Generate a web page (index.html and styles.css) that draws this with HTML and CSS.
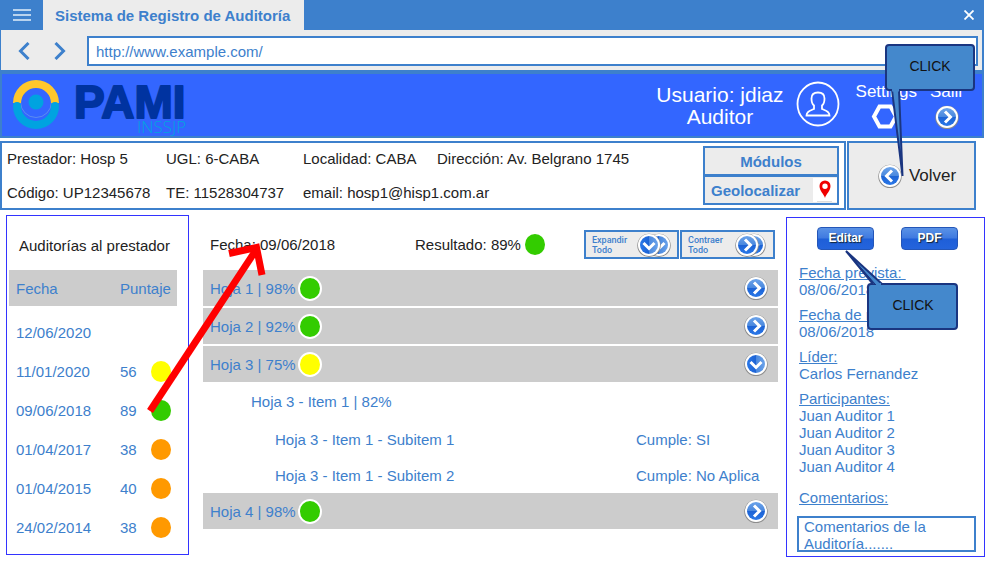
FILE: index.html
```html
<!DOCTYPE html>
<html lang="es">
<head>
<meta charset="utf-8">
<title>Sistema de Registro de Auditoría</title>
<link rel="stylesheet" href="styles.css">
</head>
<body>
<svg class="defs" aria-hidden="true">
  <defs>
    <linearGradient id="disc" x1="0" y1="0" x2="0" y2="1">
      <stop offset="0" stop-color="#6ba3ea"/>
      <stop offset="0.48" stop-color="#4a88de"/>
      <stop offset="0.5" stop-color="#1c62d4"/>
      <stop offset="1" stop-color="#2a78e8"/>
    </linearGradient>
    <linearGradient id="disc-side" x1="0" y1="0" x2="1" y2="0">
      <stop offset="0" stop-color="#2a78e8"/>
      <stop offset="0.5" stop-color="#1c62d4"/>
      <stop offset="0.52" stop-color="#4a88de"/>
      <stop offset="1" stop-color="#6ba3ea"/>
    </linearGradient>
    <symbol id="go-right" viewBox="0 0 26 26">
      <circle cx="13" cy="13.400" r="11.700" fill="#8c8c8c"/>
      <circle cx="13" cy="13" r="11" fill="#fff"/>
      <circle cx="13" cy="13" r="9" fill="url(#disc)"/>
      <path d="M11 7.500l5.500 5.500-5.500 5.500" fill="none" stroke="#fff" stroke-width="3"/>
    </symbol>
    <symbol id="go-left" viewBox="0 0 26 26">
      <circle cx="13" cy="13.400" r="11.700" fill="#8c8c8c"/>
      <circle cx="13" cy="13" r="11" fill="#fff"/>
      <circle cx="13" cy="13" r="9" fill="url(#disc)"/>
      <path d="M15 7.500L9.500 13l5.500 5.500" fill="none" stroke="#fff" stroke-width="3"/>
    </symbol>
    <symbol id="go-down" viewBox="0 0 26 26">
      <circle cx="13" cy="13.400" r="11.700" fill="#8c8c8c"/>
      <circle cx="13" cy="13" r="11" fill="#fff"/>
      <circle cx="13" cy="13" r="9" fill="url(#disc-side)"/>
      <path d="M7.500 11l5.500 5.500 5.500-5.500" fill="none" stroke="#fff" stroke-width="3"/>
    </symbol>
  </defs>
</svg>

<div class="window">
  <div class="titlebar">
    <button class="menu" aria-label="Menú">
      <svg width="18" height="14" viewBox="0 0 18 14"><path d="M0 2h18M0 7h18M0 12h18" stroke="#b9d3ee" stroke-width="1.800"/></svg>
    </button>
    <div class="tab">Sistema de Registro de Auditoría</div>
    <button class="close" aria-label="Cerrar">
      <svg width="10" height="10" viewBox="0 0 10 10"><path d="M.5.5l9 9M9.500.5l-9 9" stroke="#fff" stroke-width="1.800"/></svg>
    </button>
  </div>

  <div class="toolbar">
    <button class="nav" aria-label="Atrás">
      <svg width="12" height="18" viewBox="0 0 12 18"><path d="M10.500 1L2.500 9l8 8" fill="none" stroke="#3d80cc" stroke-width="3"/></svg>
    </button>
    <button class="nav" aria-label="Adelante">
      <svg width="12" height="18" viewBox="0 0 12 18"><path d="M1.500 1l8 8-8 8" fill="none" stroke="#3d80cc" stroke-width="3"/></svg>
    </button>
    <input class="address" type="text" aria-label="Dirección web" value="http://www.example.com/">
  </div>

  <header class="brand">
    <svg class="logo" width="182" height="62" viewBox="0 0 182 62" role="img" aria-label="PAMI INSSJP">
      <circle cx="24" cy="28" r="15.500" fill="none" stroke="#5b8cf0" stroke-width="1"/>
      <path d="M5 29a19 19 0 0 1 38 0" fill="none" stroke="#ffc72c" stroke-width="8"/>
      <path d="M5 32a19 19 0 0 0 38 0" fill="none" stroke="#00a3e0" stroke-width="8" stroke-linecap="round"/>
      <circle cx="24" cy="28" r="7.500" fill="#00a3e0"/>
      <text class="logo-name" x="62" y="44">PAMI</text>
      <text class="logo-sub" x="125" y="59">INSSJP</text>
    </svg>
    <div class="user">Usuario: jdiaz<br>Auditor</div>
    <svg class="avatar" width="44" height="46" viewBox="0 0 44 46" fill="none" stroke="#fff" stroke-width="1.800">
      <ellipse cx="22" cy="23" rx="20.500" ry="21.500"/>
      <path d="M18 28v-3.500c-2-1.500-2.500-4-2.500-7 0-4 2.500-6 6.500-6s6.500 2 6.500 6c0 3-.5 5.500-2.500 7V28c4 1.800 7.500 2.500 7.500 6.500h-23c0-4 3.500-4.700 7.500-6.500z"/>
    </svg>
    <button class="action">Settings
      <svg width="32" height="26" viewBox="0 0 32 26"><path d="M9.500 2.500h11l5.500 10-5.500 10h-11L4 12.500z" fill="none" stroke="#fff" stroke-width="4"/></svg>
    </button>
    <button class="action">Salir
      <svg width="26" height="26"><use href="#go-right"/></svg>
    </button>
  </header>

  <section class="provider">
    <div class="card">
      <div class="facts">
        <span>Prestador: Hosp 5</span><span>UGL: 6-CABA</span><span>Localidad: CABA</span><span>Dirección: Av. Belgrano 1745</span>
        <span>Código: UP12345678</span><span>TE: 11528304737</span><span class="wide">email: hosp1@hisp1.com.ar</span>
      </div>
      <div class="tools">
        <button class="tool">Módulos</button>
        <button class="tool geo">Geolocalizar
          <span class="pin"><svg width="24" height="24" viewBox="0 0 24 24"><path fill="#f00000" fill-rule="evenodd" d="M12 20c-1-4-5.500-7-5.500-12a5.500 5.500 0 0 1 11 0c0 5-4.500 8-5.500 12zM12 5.500a2.700 2.700 0 1 0 0 5.400 2.700 2.700 0 0 0 0-5.400z"/><path d="M4 23.500h15" stroke="#ddd"/></svg></span>
        </button>
      </div>
    </div>
    <button class="back"><svg width="26" height="26"><use href="#go-left"/></svg>Volver</button>
  </section>

  <main class="columns">
    <section class="audits">
      <h2>Auditorías al prestador</h2>
      <table>
        <thead><tr><th>Fecha</th><th colspan="2">Puntaje</th></tr></thead>
        <tbody>
          <tr><td>12/06/2020</td><td></td><td></td></tr>
          <tr><td>11/01/2020</td><td>56</td><td><i class="dot yellow"></i></td></tr>
          <tr><td>09/06/2018</td><td>89</td><td><i class="dot green"></i></td></tr>
          <tr><td>01/04/2017</td><td>38</td><td><i class="dot orange"></i></td></tr>
          <tr><td>01/04/2015</td><td>40</td><td><i class="dot orange"></i></td></tr>
          <tr><td>24/02/2014</td><td>38</td><td><i class="dot orange"></i></td></tr>
        </tbody>
      </table>
    </section>

    <section class="detail">
      <div class="summary">
        <span class="date">Fecha: 09/06/2018</span>
        <span>Resultado: 89%</span><i class="dot green"></i>
        <div class="toggles">
          <button class="toggle"><span>Expandir Todo</span>
            <svg width="36" height="26"><use href="#go-down" x="10" width="26" height="26"/><use href="#go-down" width="26" height="26"/></svg>
          </button>
          <button class="toggle"><span>Contraer Todo</span>
            <svg width="34" height="26"><use href="#go-right" x="7" width="26" height="26"/><use href="#go-right" width="26" height="26"/></svg>
          </button>
        </div>
      </div>
      <div class="sheet"><span>Hoja 1 | 98%</span><i class="dot green ring"></i><button class="open" aria-label="Abrir hoja 1"><svg width="26" height="26"><use href="#go-right"/></svg></button></div>
      <div class="sheet"><span>Hoja 2 | 92%</span><i class="dot green ring"></i><button class="open" aria-label="Abrir hoja 2"><svg width="26" height="26"><use href="#go-right"/></svg></button></div>
      <div class="sheet"><span>Hoja 3 | 75%</span><i class="dot yellow ring"></i><button class="open" aria-label="Cerrar hoja 3"><svg width="26" height="26"><use href="#go-down"/></svg></button></div>
      <div class="items">
        <div class="item">Hoja 3 - Item 1 | 82%</div>
        <div class="item sub"><span>Hoja 3 - Item 1 - Subitem 1</span><span class="verdict">Cumple: SI</span></div>
        <div class="item sub"><span>Hoja 3 - Item 1 - Subitem 2</span><span class="verdict">Cumple: No Aplica</span></div>
      </div>
      <div class="sheet"><span>Hoja 4 | 98%</span><i class="dot green ring"></i><button class="open" aria-label="Abrir hoja 4"><svg width="26" height="26"><use href="#go-right"/></svg></button></div>
    </section>

    <aside class="info">
      <div class="buttons"><button class="glossy">Editar</button><button class="glossy">PDF</button></div>
      <dl>
        <dt>Fecha prevista:&nbsp;</dt><dd>08/06/2018</dd>
        <dt>Fecha de realización:</dt><dd>08/06/2018</dd>
        <dt>Líder:</dt><dd>Carlos Fernandez</dd>
        <dt>Participantes:</dt><dd>Juan Auditor 1</dd><dd>Juan Auditor 2</dd><dd>Juan Auditor 3</dd><dd>Juan Auditor 4</dd>
      </dl>
      <label for="comments">Comentarios:</label>
      <textarea id="comments" rows="2">Comentarios de la Auditoría.......</textarea>
    </aside>
  </main>

  <svg class="arrow" width="130" height="180" viewBox="0 0 130 180" fill="none" stroke="#f00" stroke-width="7" aria-hidden="true">
    <path d="M10 171L116 10"/><path d="M89 13.500L116.500 7.500 122 35"/>
  </svg>

  <div class="callout callout-back">
    <svg width="92" height="136" viewBox="0 0 92 136" fill="#4488cc" stroke="#1a3580" stroke-width="2">
      <rect x="2" y="2" width="88" height="45" rx="3"/>
      <path d="M8 47L18.500 133 15 47"/><path d="M8 47h7" stroke="#4488cc" stroke-width="3"/>
    </svg>
    <span>CLICK</span>
  </div>
  <div class="callout callout-edit">
    <svg width="114" height="82" viewBox="0 0 114 82" fill="#4488cc" stroke="#1a3580" stroke-width="2">
      <rect x="23" y="34" width="89" height="45" rx="3"/>
      <path d="M28 34L1 1 37 34"/><path d="M27 32L2 2 30 34z" fill="#1a3580" stroke-width="1"/><path d="M31 34.500h5" stroke="#4488cc" stroke-width="3"/>
    </svg>
    <span>CLICK</span>
  </div>
</div>
</body>
</html>
```
FILE: styles.css
```css
* { box-sizing: border-box; }

body {
  margin: 0;
  background: #fff;
  color: #222;
  font: 15px/17px "Liberation Sans", Arial, sans-serif;
}

button {
  margin: 0;
  padding: 0;
  border: 0;
  background: none;
  color: inherit;
  font: inherit;
}

svg { display: block; flex: none; }
.defs { position: absolute; width: 0; height: 0; }

.window { position: relative; margin-right: 3px; }

/* Browser chrome */
.titlebar { display: flex; height: 30px; background: #3d80cc; }
.menu { display: flex; width: 43px; align-items: center; justify-content: center; }
.tab {
  padding: 7px 14px 0 12px;
  background: #ececec;
  color: #3d80cc;
  font-weight: bold;
}
.close { margin-left: auto; padding: 0 10px; }

.toolbar {
  display: flex;
  height: 40px;
  padding: 2px 4px 0 17px;
  border: solid #3d80cc;
  border-width: 0 2px 0 1px;
  background: #ececec;
  align-items: center;
}
.nav { width: 12px; margin-right: 24px; }
.nav + .address { margin-left: -3px; }
.address {
  flex: 1;
  min-width: 0;
  height: 30px;
  padding: 0 7px;
  border: 2px solid #3d80cc;
  background: #fff;
  color: #3d80cc;
  font: inherit;
}

/* Application header */
.brand {
  display: flex;
  height: 68px;
  padding: 0 18px 0 10px;
  border: solid #3d80cc;
  border-width: 4px 2px 2px;
  background: #3366ff;
  color: #fff;
}
.logo { overflow: visible; }
.logo-name {
  fill: #0033a0;
  stroke: #0033a0;
  stroke-width: 2px;
  stroke-linejoin: round;
  font: 700 46px "Liberation Sans", sans-serif;
}
.logo-sub { fill: #00a3e0; font: 300 17px "Open Sans", sans-serif; }
.user {
  margin: 10px 12px 0 auto;
  font-size: 21px;
  line-height: 22px;
  text-align: center;
}
.avatar { margin: 7px 16px 0 0; }
.action {
  display: flex;
  flex-direction: column;
  margin: 8px 13px 0 0;
  gap: 2px;
  align-items: center;
  align-self: flex-start;
  font-size: 17px;
  line-height: 20px;
}
.action:last-child { margin-right: 0; }

/* Provider strip */
.provider { display: flex; margin: 3px 8px 0 0; gap: 1px; }
.card { display: flex; flex: 1; height: 69px; border: 2px solid #3d80cc; }
.facts {
  display: grid;
  flex: 1;
  padding: 7px 0 0 5px;
  grid-template-columns: 159px 137px 134px 1fr;
  row-gap: 17px;
  align-content: start;
  white-space: nowrap;
}
.wide { grid-column: span 2; }
.tools { width: 136px; margin: 3px 5px; }
.tool {
  display: block;
  width: 100%;
  height: 30px;
  border: 2px solid #3d80cc;
  background: #ececec;
  color: #3d80cc;
  font-weight: bold;
}
.geo { display: flex; margin-top: -1px; padding-left: 6px; align-items: center; justify-content: space-between; }
.pin { background: #fff; }
.back {
  display: flex;
  width: 129px;
  padding-left: 10px;
  border: 2px solid #3d80cc;
  background: #ececec;
  font-size: 17px;
  gap: 6px;
  align-items: center;
  justify-content: center;
}

/* Main columns */
.columns { display: flex; margin: 5px -1px 0 6px; align-items: flex-start; }
.dot { display: block; width: 20px; height: 21px; border-radius: 50%; }
.green { background: #33cc00; }
.yellow { background: #ffff00; }
.orange { background: #ff9900; }
.ring { width: 24px; height: 25px; border: 2px solid #fff; }

.audits {
  width: 183px;
  height: 340px;
  margin-right: 14px;
  border: 1px solid #3333ff;
}
h2 {
  margin: 21px 0 16px 12px;
  font-size: 15px;
  font-weight: normal;
  white-space: nowrap;
}
.audits table {
  width: 168px;
  margin-left: 2px;
  border-collapse: collapse;
  color: #3d80cc;
}
.audits th { height: 36px; background: #ccc; font-weight: normal; text-align: left; }
.audits tbody::before { display: block; height: 7px; content: ""; }
.audits td { height: 39px; }
.audits th, .audits td { padding: 0; }
.audits th:first-child, .audits td:first-child { width: 111px; padding-left: 7px; }
.audits td:nth-child(2) { width: 31px; }

.detail { flex: 1; margin-right: 8px; color: #3d80cc; }
.summary {
  display: flex;
  height: 29px;
  margin: 15px 3px 11px 7px;
  align-items: center;
  color: #222;
}
.date { width: 205px; }
.summary .dot { margin-left: 4px; }
.toggles { display: flex; margin-left: auto; gap: 1px; }
.toggle {
  display: flex;
  width: 95px;
  height: 29px;
  padding: 0 5px 0 6px;
  border: 2px solid #3d80cc;
  background: #ececec;
  color: #3d80cc;
  font: 500 9px/10px Roboto, sans-serif;
  align-items: center;
  justify-content: space-between;
  text-align: left;
}
.toggle span { width: 40px; }
.sheet {
  display: flex;
  height: 36px;
  padding: 0 9px 0 7px;
  background: #ccc;
  gap: 2px;
  align-items: center;
}
.sheet + .sheet { margin-top: 2px; }
.open { margin-left: auto; }
.item { display: flex; height: 39px; padding-left: 48px; align-items: center; }
.sub { height: 36px; padding-left: 72px; }
.verdict { width: 142px; margin-left: auto; }

.info {
  width: 199px;
  height: 340px;
  margin-top: 2px;
  padding: 9px 8px 0 10px;
  border: 1px solid #3333ff;
  color: #3d80cc;
}
.buttons { display: flex; margin: 0 18px 14px 20px; justify-content: space-between; }
.glossy {
  width: 57px;
  height: 23px;
  border: 1px solid #2456b8;
  border-radius: 4px;
  background: linear-gradient(#5a92e6, #3f7ae0 48%, #1f5fd8 52%, #2464dc);
  color: #fff;
  font-size: 12px;
  font-weight: bold;
  text-shadow: 1px 1px 1px #123;
}
dl { margin: 0 0 14px 2px; }
dd { margin: 0; }
dt, label { text-decoration: underline; }
dd + dt { margin-top: 8px; }
dt { white-space: nowrap; }
label { display: block; margin: 0 0 10px 2px; }
textarea {
  display: block;
  width: 100%;
  height: 36px;
  margin: 0;
  padding: 0 5px;
  overflow: hidden;
  border: 2px solid #3d80cc;
  background: #fff;
  color: inherit;
  font: inherit;
  resize: none;
}

/* Annotations laid over the page */
.arrow { position: absolute; top: 240px; left: 140px; }
.callout { position: absolute; color: #111; font-size: 14px; }
.callout span { position: absolute; right: 0; width: 92px; text-align: center; }
.callout-back { top: 43px; right: 8px; }
.callout-back span { top: 15px; }
.callout-edit { top: 250px; right: 25px; }
.callout-edit span { top: 47px; }
```
